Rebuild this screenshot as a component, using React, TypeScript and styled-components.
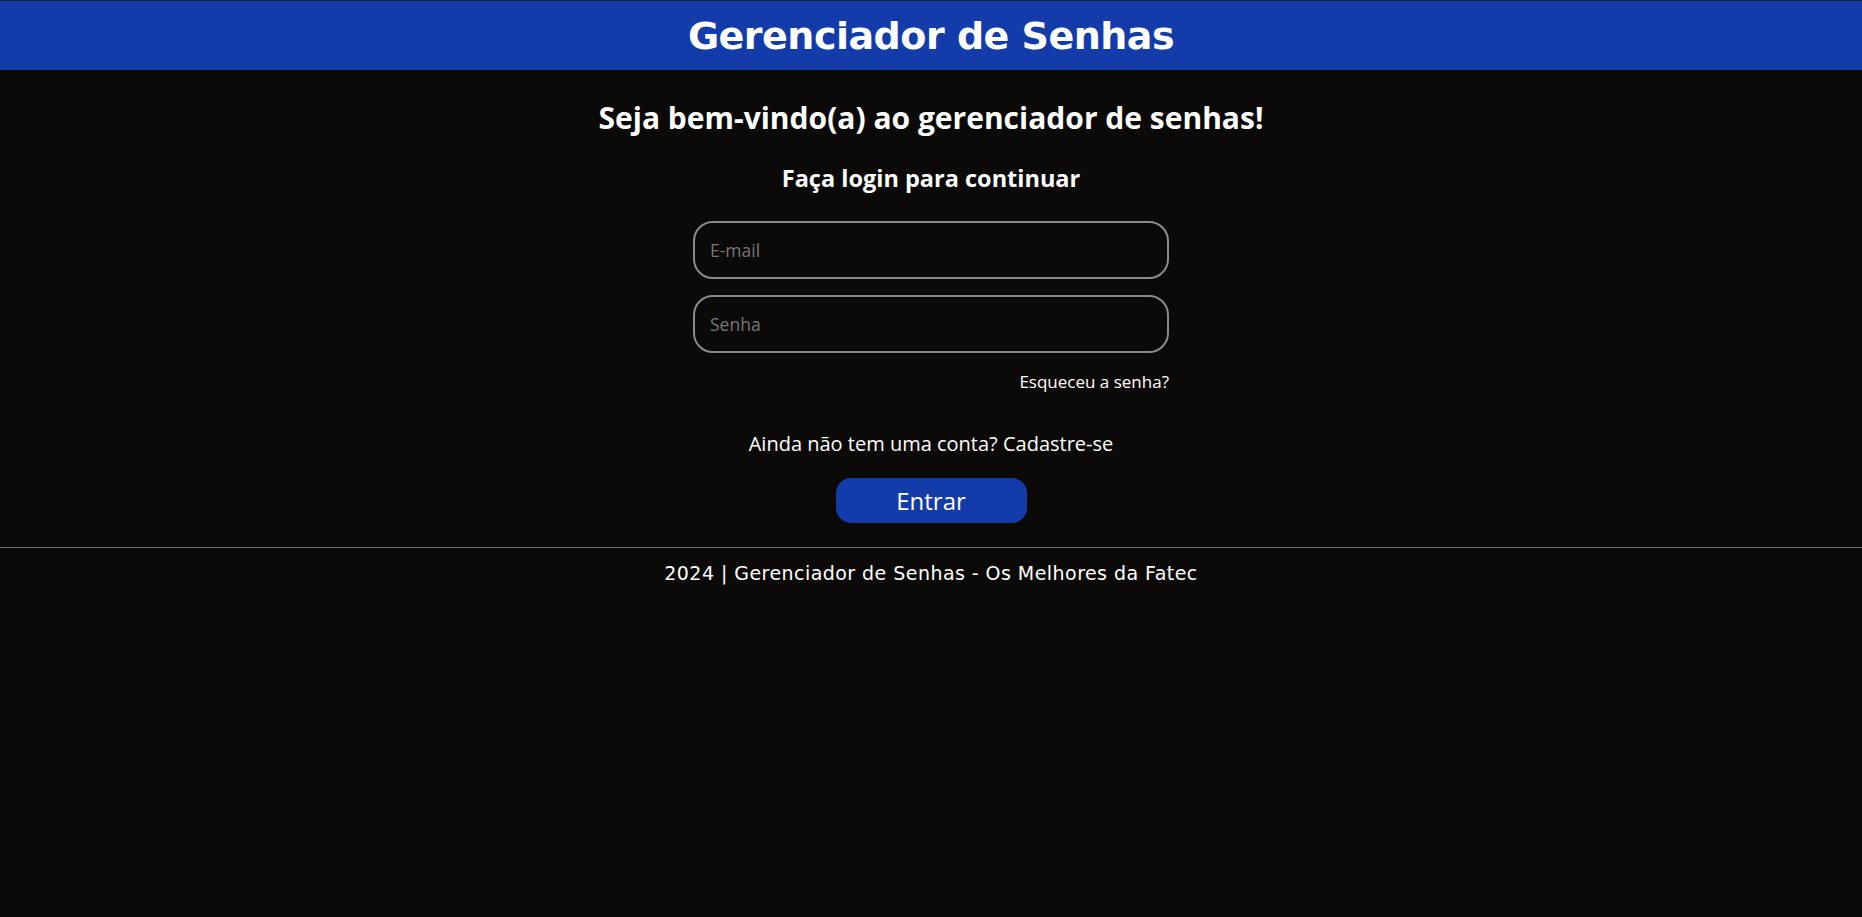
import React from "react";
import styled, { createGlobalStyle } from "styled-components";

const Global = createGlobalStyle`
  html, body { margin: 0; padding: 0; background: #0b0a09; }
  body { font-family: "Open Sans", "Noto Sans", sans-serif; color: #fff; min-height: 917px; }
  * { box-sizing: border-box; }
`;

const Page = styled.div`
  min-height: 917px;
  background: #0b0a09;
  border-top: 1px solid #1c1f2b;
  display: flex;
  flex-direction: column;
`;

const Header = styled.header`
  height: 69px;
  background: #133caa;
  display: flex;
  align-items: center;
  justify-content: center;
`;

const Title = styled.h1`
  margin: 0;
  font-family: "DejaVu Sans", sans-serif;
  font-weight: 700;
  font-size: 38px;
  letter-spacing: -0.5px;
  color: #fff;
`;

const Main = styled.main`
  display: flex;
  flex-direction: column;
  align-items: center;
  padding: 28px 0 24px;
`;

const Welcome = styled.h2`
  margin: 0;
  font-size: 30px;
  font-weight: 700;
  line-height: 40px;
`;

const Sub = styled.h3`
  margin: 24px 0 0;
  font-size: 23.5px;
  font-weight: 700;
  line-height: 32px;
`;

const Form = styled.form`
  width: 476px;
  margin-top: 27px;
  display: flex;
  flex-direction: column;
  gap: 16px;
`;

const Input = styled.input`
  width: 100%;
  height: 58px;
  border: 2px solid #8a8a8a;
  border-radius: 20px;
  background: transparent;
  padding: 0 15px;
  font-family: "Open Sans", sans-serif;
  font-size: 17.5px;
  color: #fff;
  outline: none;
  &::placeholder { color: #777777; }
`;

const Forgot = styled.a`
  align-self: flex-end;
  margin-top: 1px;
  font-size: 17px;
  line-height: 24px;
  color: #fff;
  text-decoration: none;
`;

const Signup = styled.p`
  margin: 36px 0 0;
  font-size: 20px;
  line-height: 28px;
`;

const Button = styled.button`
  margin-top: 20px;
  width: 191px;
  height: 45px;
  border: none;
  border-radius: 15px;
  background: #133caa;
  color: #fff;
  font-family: "Open Sans", sans-serif;
  font-size: 24px;
`;

const Footer = styled.footer`
  border-top: 1px solid #6e6e6e;
  padding-top: 13px;
  text-align: center;
  font-family: "DejaVu Sans", sans-serif;
  font-size: 19px;
  line-height: 24px;
  letter-spacing: 0.45px;
  color: #fff;
`;

export default function App() {
  return (
    <>
      <Global />
      <Page>
        <Header>
          <Title>Gerenciador de Senhas</Title>
        </Header>
        <Main>
          <Welcome>Seja bem-vindo(a) ao gerenciador de senhas!</Welcome>
          <Sub>Faça login para continuar</Sub>
          <Form onSubmit={(e) => e.preventDefault()}>
            <Input type="email" placeholder="E-mail" />
            <Input type="password" placeholder="Senha" />
            <Forgot href="#">Esqueceu a senha?</Forgot>
          </Form>
          <Signup>Ainda não tem uma conta? Cadastre-se</Signup>
          <Button type="button">Entrar</Button>
        </Main>
        <Footer>2024 | Gerenciador de Senhas - Os Melhores da Fatec</Footer>
      </Page>
    </>
  );
}
